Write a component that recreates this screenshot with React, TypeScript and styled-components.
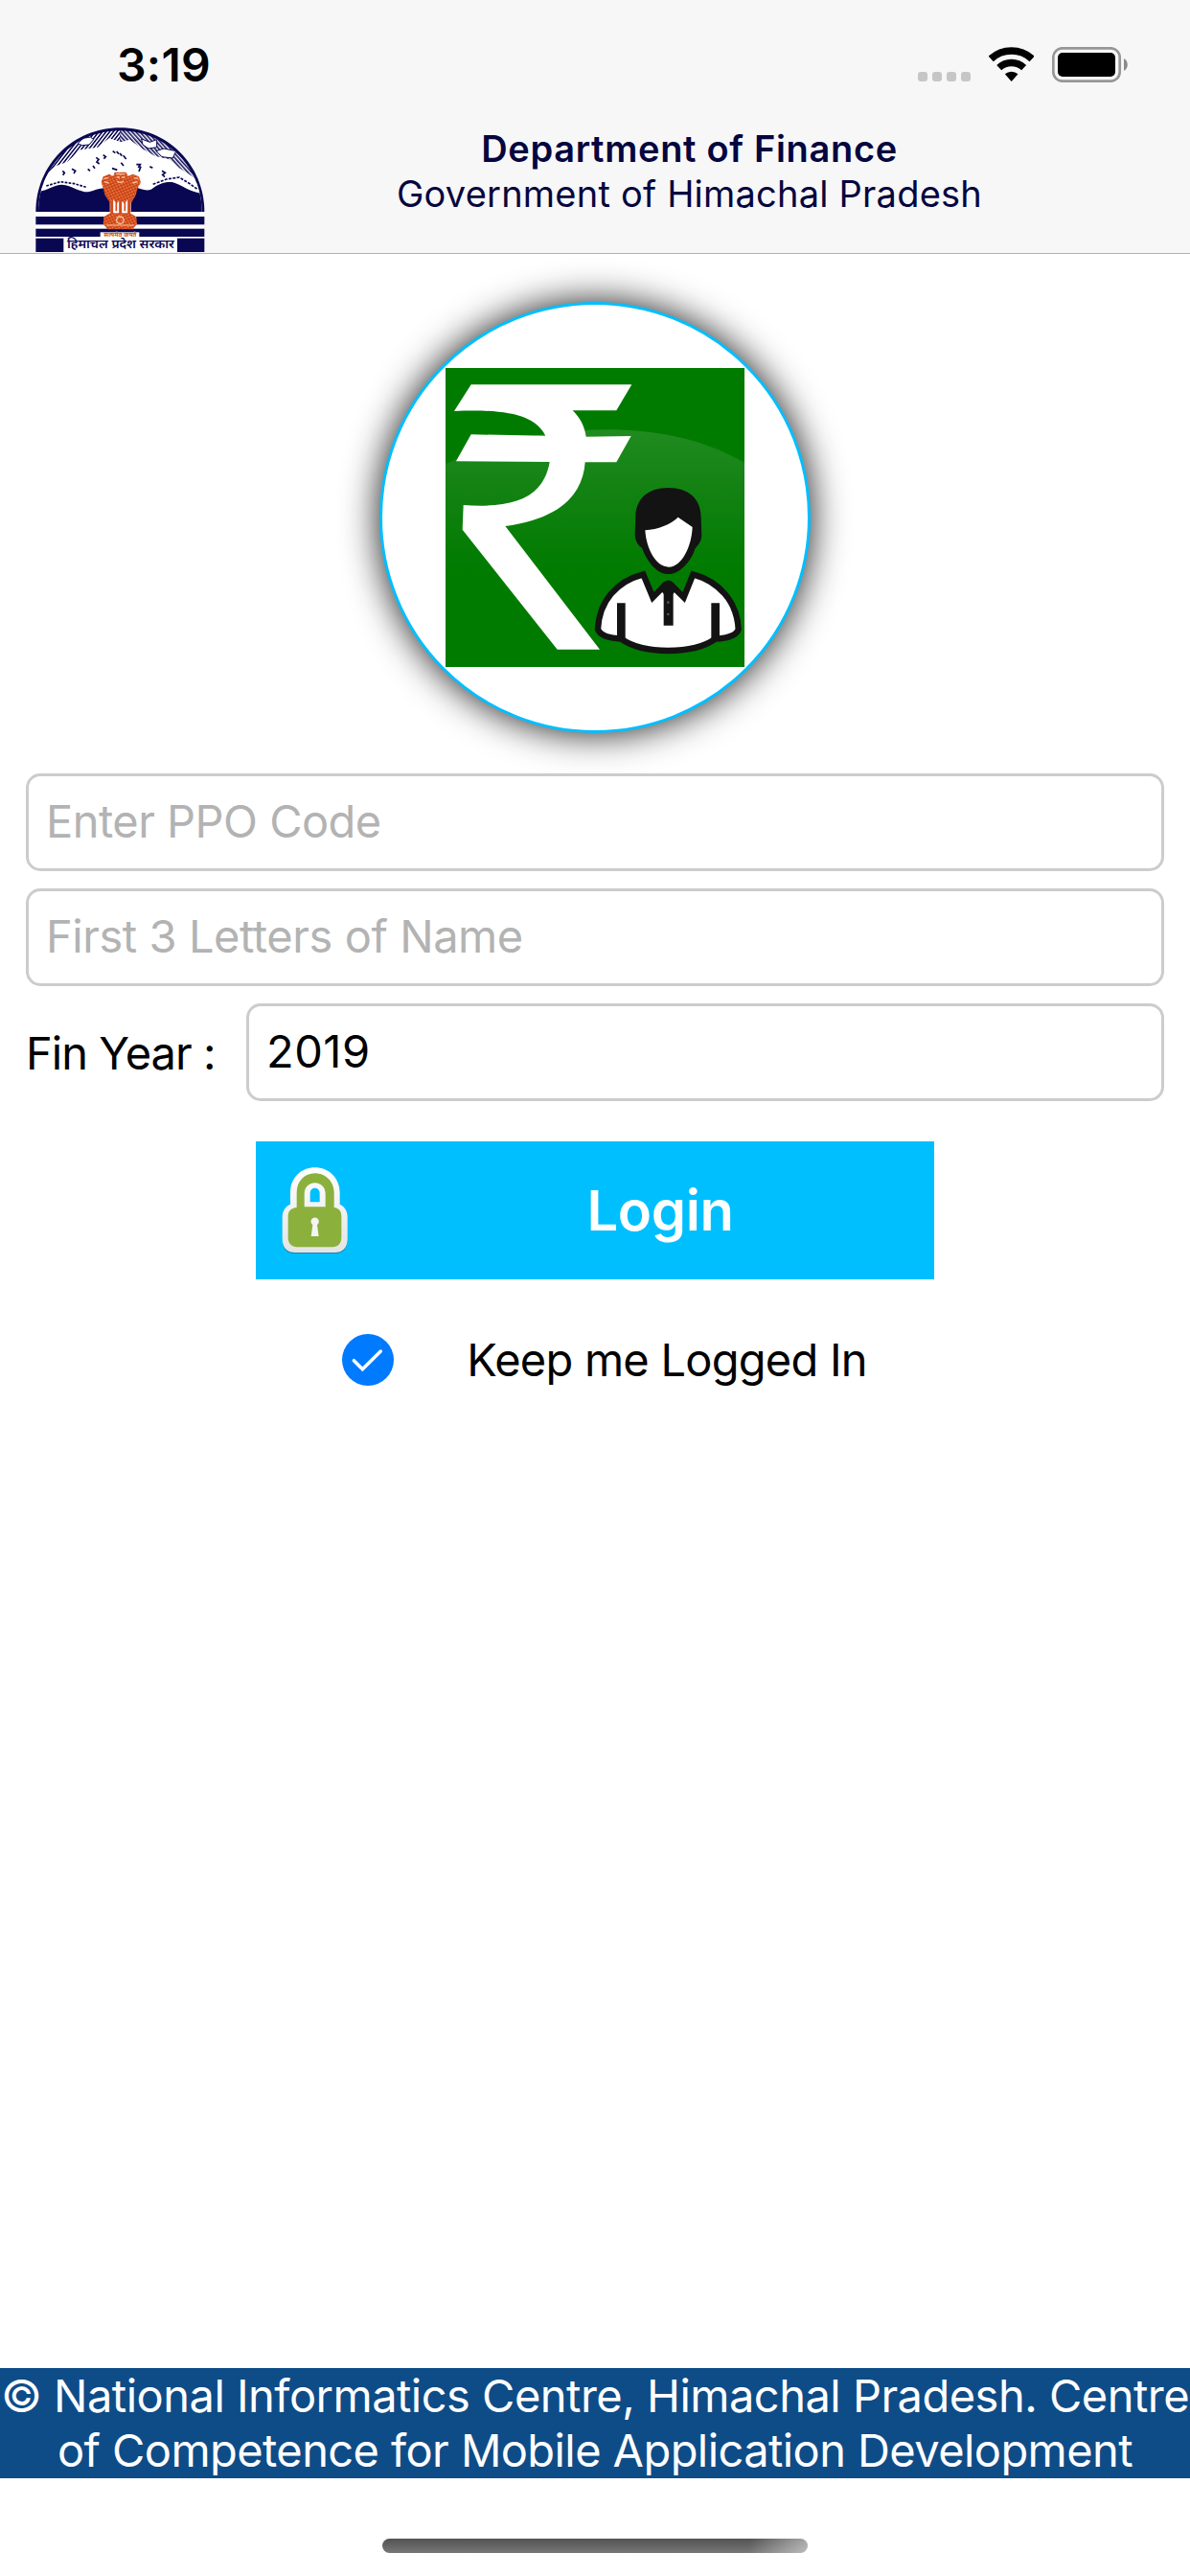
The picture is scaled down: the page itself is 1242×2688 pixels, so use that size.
import React from 'react';
import styled, { createGlobalStyle } from 'styled-components';

const FONT = "Inter, 'Liberation Sans', sans-serif";
const NAVY = '#0a0752';
const INK = '#131313';
const SKY_BLUE = '#00bfff';
const EMBLEM = '#d64a18';

const GlobalStyle = createGlobalStyle`
  * {
    box-sizing: border-box;
  }

  body {
    margin: 0;
    background: #ffffff;
    color: #000000;
    font-family: ${FONT};
  }

  svg {
    display: block;
    flex: none;
  }
`;

const Screen = styled.div`
  width: 1242px;
  height: 2688px;
  display: flex;
  flex-direction: column;
  background: #ffffff;
  overflow: hidden;
`;

const Header = styled.header`
  height: 265px;
  background: #f7f7f8;
  border-bottom: 1px solid #b2b2b4;
`;

const StatusBar = styled.div`
  height: 132px;
  padding: 0 65px 0 122px;
  display: flex;
  justify-content: space-between;
`;

const Clock = styled.span`
  margin-top: 39px;
  font-size: 48px;
  line-height: 58px;
  font-weight: 600;
  letter-spacing: 0.3px;
`;

const StatusIcons = styled.div`
  display: flex;
  align-items: flex-start;
  gap: 19px;
  padding-top: 49px;
`;

const SignalDots = styled.div`
  display: flex;
  gap: 5px;
  margin-top: 26px;
`;

const SignalDot = styled.span`
  width: 10px;
  height: 10px;
  border-radius: 3px;
  background: #c6c6c7;
`;

const TitleBar = styled.div`
  height: 132px;
  display: flex;
  padding-left: 37px;
`;

const LogoBox = styled.div`
  padding-top: 1px;
`;

const Titles = styled.div`
  flex: 1;
  display: flex;
  flex-direction: column;
  align-items: center;
  padding-right: 17px;
  color: #05063f;
`;

const Title = styled.div<{ $bold?: boolean }>`
  font-size: 38px;
  line-height: 47px;
  white-space: nowrap;
  font-weight: ${props => props.$bold ? 600 : 400};
  letter-spacing: ${props => props.$bold ? '0.67px' : '0.22px'};
`;

const Main = styled.main`
  flex: 1;
  display: flex;
  flex-direction: column;
  align-items: center;
  padding: 50px 27px 0;
`;

const Avatar = styled.div`
  width: 450px;
  height: 450px;
  display: flex;
  align-items: center;
  justify-content: center;
  border: 3px solid ${SKY_BLUE};
  border-radius: 50%;
  background: #ffffff;
  box-shadow: 0 0 38px rgba(0, 0, 0, 0.9);
`;

const Form = styled.form`
  width: 100%;
  margin-top: 42px;
  display: flex;
  flex-direction: column;
  gap: 18px;
`;

const TextField = styled.input<{ $spacing: number }>`
  display: block;
  flex: 1 1 102px;
  min-width: 0;
  height: 102px;
  padding: 0 18px 3px;
  border: 3px solid #cccccc;
  border-radius: 15px;
  background: #ffffff;
  color: #000000;
  font: 400 47px ${FONT};
  letter-spacing: ${props => props.$spacing}px;
  outline: none;

  &::placeholder {
    color: #b3b3b3;
    opacity: 1;
  }
`;

const YearRow = styled.div`
  display: flex;
  align-items: center;
`;

const YearLabel = styled.label`
  width: 230px;
  font-size: 47px;
  line-height: 57px;
  letter-spacing: -0.95px;
  white-space: nowrap;
`;

const LoginButton = styled.button`
  width: 708px;
  height: 144px;
  margin-top: 42px;
  padding: 0 0 0 27px;
  display: flex;
  align-items: center;
  border: 0;
  background: ${SKY_BLUE};
  color: #ffffff;
  font: 600 58px ${FONT};
  letter-spacing: -0.4px;
`;

const LoginText = styled.span`
  flex: 1;
  margin-left: 40px;
  text-align: center;
`;

const KeepRow = styled.div`
  margin-top: 57px;
  padding-left: 20px;
  display: flex;
  align-items: center;
  gap: 76px;
  font-size: 47px;
  line-height: 54px;
  letter-spacing: -0.76px;
  white-space: nowrap;
`;

const Footer = styled.footer`
  height: 115px;
  display: flex;
  flex-direction: column;
  align-items: center;
  background: #0e4c88;
  color: #ffffff;
`;

const FooterLine = styled.div<{ $spacing: number }>`
  font-size: 47px;
  line-height: 57px;
  white-space: nowrap;
  letter-spacing: ${props => props.$spacing}px;
`;

const HomeArea = styled.div`
  height: 102px;
  padding-top: 63px;
  display: flex;
  justify-content: center;
`;

const HomeIndicator = styled.div`
  width: 444px;
  height: 15px;
  border-radius: 8px;
  background:
    linear-gradient(100deg, transparent 86%, rgba(255, 255, 255, 0.5)),
    linear-gradient(#535353, #777777);
`;

const WifiIcon = () => (
  <svg width="47.5" height="36" viewBox="275 57 142.5 108">
    <g fill="none" stroke="#000">
      <path d="M281.6 94.4A94.5 94.5 0 0 1 410.4 94.4" strokeWidth="23" />
      <path d="M307.1 121.8A57 57 0 0 1 384.9 121.8" strokeWidth="22" />
    </g>
    <path d="M346 165L325.5 142A30.5 30.5 0 0 1 366.5 142Z" />
  </svg>
);

const BatteryIcon = () => (
  <svg width="79" height="37" viewBox="0 0 79 37">
    <rect x="1.3" y="1.3" width="69.4" height="34.4" rx="9.5" fill="none" stroke="#979798" strokeWidth="2.7" />
    <rect x="6" y="6" width="60" height="25" rx="5" />
    <path d="M75 12C80 14.5 80 22.5 75 25Z" fill="#8b8b8c" />
  </svg>
);

const StateLogo = () => (
  <svg width="177" height="130" viewBox="50 38 531 390">
    <defs>
      <pattern id="hatchLeft" width="9" height="9" patternUnits="userSpaceOnUse" patternTransform="rotate(38)">
        <rect width="9" height="9" fill="#fff" />
        <rect width="4.6" height="9" fill={NAVY} />
      </pattern>
      <pattern id="hatchRight" width="9" height="9" patternUnits="userSpaceOnUse" patternTransform="rotate(-42)">
        <rect width="9" height="9" fill="#fff" />
        <rect width="4.6" height="9" fill={NAVY} />
      </pattern>
      <pattern id="carving" width="13" height="12" patternUnits="userSpaceOnUse" patternTransform="rotate(20)">
        <rect width="13" height="12" fill={EMBLEM} />
        <path d="M2 2h4M8 8h4" stroke="#f6a878" strokeWidth="3" />
        <path d="M8 3h3M2 9h3" stroke="#a52c0c" strokeWidth="3" />
      </pattern>
      <clipPath id="dome">
        <path d="M59 302C59 160 175 48 315 48S571 160 571 302Z" />
      </clipPath>
    </defs>

    <path d="M51 302C51 155 168 39 315 39S579 155 579 302Z" fill={NAVY} />
    <g clipPath="url(#dome)">
      <rect x="51" y="39" width="264" height="200" fill="url(#hatchLeft)" />
      <rect x="315" y="39" width="264" height="200" fill="url(#hatchRight)" />
      <path d="M51 215L110 160L150 145L190 108L245 100L280 72L318 84L345 76L385 105L425 128L470 138L500 165L540 190L579 220V302H51Z" fill="#fff" />
      <path d="M182 88L200 72L222 68L232 76L218 92L196 94Z" fill="#fff" stroke={NAVY} strokeWidth="3" />
      <path d="M382 74L408 84L430 76V100L404 104L386 92Z" fill="#fff" stroke={NAVY} strokeWidth="3" />
      <path d="M428 112L452 104L490 112L480 134L446 130Z" fill="#fff" stroke={NAVY} strokeWidth="3" />
      <path d="M51 240C90 236 105 218 133 217C165 220 185 240 215 240C235 236 250 226 275 228L360 224C380 230 395 238 412 232C435 214 455 207 478 209C510 218 535 242 579 246V302H51Z" fill={NAVY} />
    </g>

    {/* rocks and tree line on the snow */}
    <g fill="none" stroke={NAVY} strokeWidth="5">
      <path d="M292 112L300 118M304 113L311 121M314 119L321 127M325 126L334 137M318 148L326 158M290 166L306 171" />
      <path d="M214 168L221 174M230 158L236 166M240 132L248 138L242 146L250 152M262 124L270 130L264 136" />
      <path d="M135 174L141 180L136 187M164 168L175 174L170 182" />
      <path d="M366 154H378L372 164M380 160L374 176M408 160L417 165M446 174L456 180L448 186L455 193" />
      <path d="M84 221L128 208L172 214L212 226" strokeDasharray="8 4" />
      <path d="M418 216L460 200L500 194L530 212L558 232" strokeDasharray="9 4" />
    </g>

    <rect x="51" y="302" width="528" height="126" fill="#fff" />
    <rect x="51" y="317" width="528" height="25" fill={NAVY} />
    <rect x="51" y="355" width="528" height="25" fill={NAVY} />
    <rect x="51" y="385" width="87" height="43" fill={NAVY} />
    <rect x="494" y="385" width="85" height="43" fill={NAVY} />

    {/* lion capital */}
    <path d="M283 260H349V312H283Z" fill="#fff" />
    <path d="M289 258V312M316 258V312M343 258V312" stroke={EMBLEM} strokeWidth="9" />
    <path d="M303 262V300M330 262V300" stroke={EMBLEM} strokeWidth="5" />
    <path d="M298 178H334L340 190L356 184L374 192L380 210L370 228L364 250L350 274L340 264L328 276L316 264L304 276L294 264L284 274L268 250L262 228L256 210L262 192L280 184L294 190Z" fill="url(#carving)" />
    <path d="M302 184H330M304 194H314M320 194H330M306 206Q316 214 326 206" fill="none" stroke="#f8c3a0" strokeWidth="4" />
    <path d="M264 198L278 196M266 208L280 212M372 198L358 196M370 208L354 212" stroke="#f8c3a0" strokeWidth="4" />
    <path d="M284 306H346L366 318L368 340L354 357H276L262 340L264 318Z" fill="url(#carving)" />
    <circle cx="315" cy="328" r="11" fill="none" stroke="#f8c3a0" strokeWidth="4" />
    <path d="M272 344H358" stroke="#f8c3a0" strokeWidth="3" />

    <rect x="253" y="366" width="122" height="19" fill="#fff" />
    <text x="264" y="381" textLength="102" lengthAdjust="spacingAndGlyphs" fontSize="17" fontWeight="700" fontFamily="'Noto Sans', sans-serif" fill={EMBLEM}>सत्यमेव जयते</text>
    <text x="149" y="417" textLength="336" lengthAdjust="spacingAndGlyphs" fontSize="40" fontWeight="600" fontFamily="'Noto Sans', sans-serif" fill={NAVY}>हिमाचल प्रदेश सरकार</text>
  </svg>
);

const PensionerIcon = () => (
  <svg width="312" height="312" viewBox="285 282 936 936">
    <defs>
      <linearGradient id="gloss" x1="0" y1="475" x2="0" y2="920" gradientUnits="userSpaceOnUse">
        <stop offset="0" stopColor="#208b20" />
        <stop offset="0.4" stopColor="#138213" />
        <stop offset="1" stopColor="#007b00" />
      </linearGradient>
    </defs>
    <rect x="285" y="282" width="936" height="936" fill="#007b00" />
    <path d="M285 583C430 510 610 475 790 475C960 475 1100 510 1221 578V920H285Z" fill="url(#gloss)" />
    <path
      d="M365 334H868L820 415H683C705 437 720 462 725 497L866 495L820 577H722C715 680 640 755 472 777L768 1163H635L338 788L341 711C480 720 590 700 611 576L318 574L365 490L598 494C565 430 480 410 312 417Z"
      fill="#fff"
    />
    <g transform="translate(690 600)">
      <path d="M190 150C190 90 230 57 292 57C355 57 395 90 395 150L397 205C397 225 385 238 376 248C365 285 330 327 293 327C255 327 225 285 210 245C195 235 188 220 188 200Z" fill={INK} />
      <path d="M220 190C260 187 300 172 323 149L368 180C366 240 335 305 294 305C255 305 224 250 220 190Z" fill="#fff" />
      <path
        d="M214 328C130 350 76 412 72 500C80 522 110 528 145 530C180 555 230 567 292 567C355 567 405 555 440 530C475 528 505 522 512 500C508 412 450 350 370 328L341 400L312 372L292 358L272 372L244 400Z"
        fill="#fff"
        stroke={INK}
        strokeWidth="19"
      />
      <path d="M264 368C275 350 284 347 292 347S309 350 320 368L308 390V488H278V390Z" fill={INK} />
      <path d="M145 418V532M440 418V532" stroke={INK} strokeWidth="26" />
      <circle cx="292" cy="416" r="4" fill="#555" />
      <circle cx="292" cy="453" r="4" fill="#555" />
    </g>
  </svg>
);

const LockIcon = () => (
  <svg width="69" height="90" viewBox="28 38 207 270">
    <defs>
      <linearGradient id="lockRim" x1="0" y1="0" x2="0" y2="1">
        <stop offset="0" stopColor="#fff" />
        <stop offset="1" stopColor="#e4e4e4" />
      </linearGradient>
    </defs>
    <path d="M56 292V270L31 262V268C31 296 46 308 70 308H194C218 308 233 296 233 268Z" fill="#0786b5" />
    <path
      fillRule="evenodd"
      d="M55 154V118C55 70 90 39 132 39S210 70 210 118V154C226 162 234 176 234 194V262C234 290 218 305 194 305H70C46 305 30 290 30 262V194C30 176 38 162 55 154ZM117 147V120C117 98 147 98 147 120V147Z"
      fill="url(#lockRim)"
    />
    <path
      fillRule="evenodd"
      d="M75 164V118C75 82 99 57 132 57S192 82 192 118V164C207 166 215 176 215 190V258C215 277 204 288 188 288H76C59 288 48 277 48 258V190C48 176 57 166 75 164ZM99 162V122C99 75 165 75 165 122V162Z"
      fill="#8bb13c"
    />
    <circle cx="132" cy="208" r="12.5" fill="#f4f4f4" />
    <path d="M126 212H138L144 254H120Z" fill="#f4f4f4" />
  </svg>
);

const CheckedIcon = () => (
  <svg width="54" height="54" viewBox="51 36 162 162">
    <circle cx="132" cy="117" r="81" fill="#007aff" />
    <path d="M88 119L115 146L172 90" fill="none" stroke="#fff" strokeWidth="10.5" strokeLinecap="round" />
  </svg>
);

const App = () => {
  const [code, setCode] = React.useState('');
  const [name, setName] = React.useState('');
  const [year, setYear] = React.useState('2019');

  return (
    <Screen>
      <GlobalStyle />
      <Header>
        <StatusBar>
          <Clock>3:19</Clock>
          <StatusIcons>
            <SignalDots>
              <SignalDot />
              <SignalDot />
              <SignalDot />
              <SignalDot />
            </SignalDots>
            <WifiIcon />
            <BatteryIcon />
          </StatusIcons>
        </StatusBar>
        <TitleBar>
          <LogoBox>
            <StateLogo />
          </LogoBox>
          <Titles>
            <Title $bold>Department of Finance</Title>
            <Title>Government of Himachal Pradesh</Title>
          </Titles>
        </TitleBar>
      </Header>
      <Main>
        <Avatar>
          <PensionerIcon />
        </Avatar>
        <Form>
          <TextField $spacing={-0.53} placeholder="Enter PPO Code" value={code} onChange={(event) => setCode(event.target.value)} />
          <TextField $spacing={-0.44} placeholder="First 3 Letters of Name" value={name} onChange={(event) => setName(event.target.value)} />
          <YearRow>
            <YearLabel htmlFor="fin-year">Fin Year :</YearLabel>
            <TextField id="fin-year" $spacing={0.5} value={year} onChange={(event) => setYear(event.target.value)} />
          </YearRow>
        </Form>
        <LoginButton type="button">
          <LockIcon />
          <LoginText>Login</LoginText>
        </LoginButton>
        <KeepRow>
          <CheckedIcon />
          <span>Keep me Logged In</span>
        </KeepRow>
      </Main>
      <Footer>
        <FooterLine $spacing={-0.51}>© National Informatics Centre, Himachal Pradesh. Centre</FooterLine>
        <FooterLine $spacing={-0.58}>of Competence for Mobile Application Development</FooterLine>
      </Footer>
      <HomeArea>
        <HomeIndicator />
      </HomeArea>
    </Screen>
  );
};

export default App;
